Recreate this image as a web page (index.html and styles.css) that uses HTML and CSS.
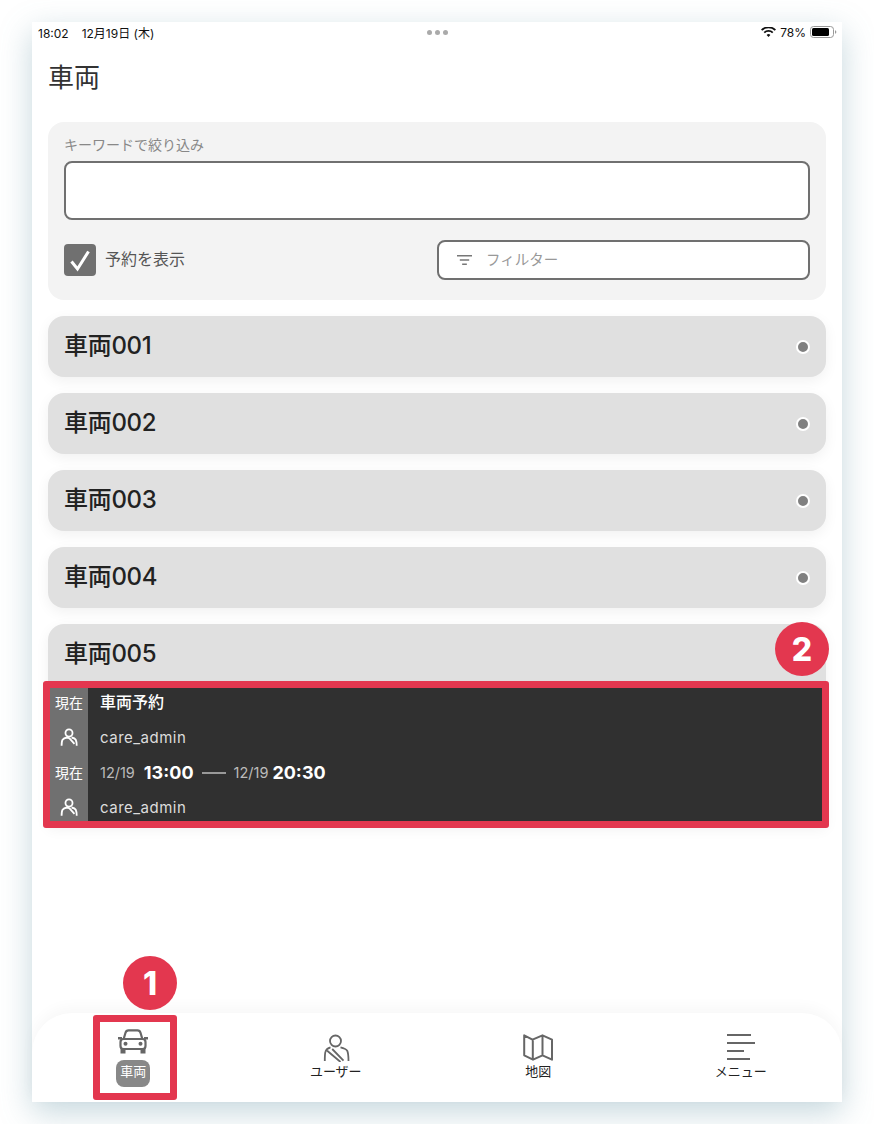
FILE: index.html
```html
<!DOCTYPE html>
<html lang="ja">
<head>
  <meta charset="UTF-8">
  <meta name="viewport" content="width=device-width, initial-scale=1.0">
  <title>車両</title>
  <link rel="stylesheet" href="styles.css">
</head>
<body>
  <div class="screen">
    <div class="status-bar">
      <div class="status-time"><span class="status-clock">18:02</span>12月19日 (木)</div>
      <div class="status-dots"><span></span><span></span><span></span></div>
      <div class="status-right">
        <svg width="15" height="11" viewBox="0 0 15 11"><path d="M7.5 9.9 5.6 7.9a2.8 2.8 0 0 1 3.8 0zM3.9 6.2 2.6 4.9a7.2 7.2 0 0 1 9.8 0L11.100 6.200a5.300 5.300 0 0 0-7.200 0zM1.300 3.700 0 2.400a10.900 10.900 0 0 1 15 0L13.700 3.700a9 9 0 0 0-12.400 0z" fill="#111"/></svg>
        <span>78%</span>
        <svg width="27" height="12" viewBox="0 0 27 12"><rect x="0.500" y="0.500" width="23" height="11" rx="3" fill="none" stroke="#999"/><rect x="2" y="2" width="17" height="8" rx="1.500" fill="#000"/><path d="M25 4.200c.9.300 1.300 1 1.300 1.800s-.4 1.500-1.300 1.800z" fill="#999"/></svg>
      </div>
    </div>

    <main class="content">
      <h1 class="page-title">車両</h1>

      <section class="filter-panel">
        <label class="field-label" for="keyword">キーワードで絞り込み</label>
        <input class="keyword-input" id="keyword" type="text">
        <div class="filter-row">
          <div class="check-group">
            <span class="check-box">
              <svg width="24" height="24" viewBox="0 0 24 24"><path d="M3.500 13.500 9.500 21 20.500 3.500" fill="none" stroke="#fff" stroke-width="3"/></svg>
            </span>
            <span class="check-label">予約を表示</span>
          </div>
          <div class="filter-btn">
            <svg width="15" height="12" viewBox="0 0 16 12"><path d="M0 1.500h16M3 6h10M5.500 10.500h5" stroke="#777" stroke-width="1.500"/></svg>
            <span>フィルター</span>
          </div>
        </div>
      </section>

      <div class="vehicle-list">
        <div class="vehicle-card"><div class="vehicle-head"><span class="vehicle-name">車両001</span><span class="status-dot"></span></div></div>
        <div class="vehicle-card"><div class="vehicle-head"><span class="vehicle-name">車両002</span><span class="status-dot"></span></div></div>
        <div class="vehicle-card"><div class="vehicle-head"><span class="vehicle-name">車両003</span><span class="status-dot"></span></div></div>
        <div class="vehicle-card"><div class="vehicle-head"><span class="vehicle-name">車両004</span><span class="status-dot"></span></div></div>
        <div class="vehicle-card open">
          <div class="vehicle-head"><span class="vehicle-name">車両005</span></div>
          <div class="reserve-panel">
            <div class="reserve-row">
              <div class="reserve-tag"><span>現在</span></div>
              <div class="reserve-title">車両予約</div>
            </div>
            <div class="reserve-row">
              <div class="reserve-tag">
                <svg width="18" height="19" viewBox="0 0 28 28"><g fill="none" stroke="#fff" stroke-width="2.800"><circle cx="14" cy="7" r="5.500"/><path d="M2.500 27c0-5 .5-8 1.500-9.500 1-1.500 3-3 6.500-3.500 2 0 3.500 .5 5 2l7 8M18 14c3 .5 5.500 1.500 6.500 3.500 1 2 1.500 5 1.500 9.500"/></g></svg>
              </div>
              <div class="reserve-user">care_admin</div>
            </div>
            <div class="reserve-row">
              <div class="reserve-tag"><span>現在</span></div>
              <div class="reserve-time">
                <span class="time-date">12/19</span><b class="time-hour">13:00</b><span class="time-dash"></span><span class="time-date">12/19</span><b class="time-hour end">20:30</b>
              </div>
            </div>
            <div class="reserve-row">
              <div class="reserve-tag">
                <svg width="18" height="19" viewBox="0 0 28 28"><g fill="none" stroke="#fff" stroke-width="2.800"><circle cx="14" cy="7" r="5.500"/><path d="M2.500 27c0-5 .5-8 1.500-9.500 1-1.500 3-3 6.500-3.500 2 0 3.500 .5 5 2l7 8M18 14c3 .5 5.500 1.500 6.500 3.500 1 2 1.500 5 1.500 9.500"/></g></svg>
              </div>
              <div class="reserve-user">care_admin</div>
            </div>
          </div>
        </div>
      </div>
    </main>

    <nav class="tab-bar">
      <div class="tab-item active">
        <svg width="30" height="25" viewBox="0 0 30 25"><g fill="none" stroke="#666" stroke-width="2.200"><path d="M5.500 10.500 7.500 3.800C8 2 9 1.300 10.500 1.300h9c1.500 0 2.500.7 3 2.500l2 6.700"/><rect x="2.500" y="10" width="25" height="10" rx="3"/></g><path d="M2.500 19h5v5.500h-5zM22.500 19h5v5.500h-5zM0 8h4v2.500H0zM26 8h4v2.500h-4z" fill="#666"/><circle cx="7.500" cy="14.800" r="2" fill="#666"/><circle cx="22.500" cy="14.800" r="2" fill="#666"/></svg>
        <span class="tab-label">車両</span>
      </div>
      <div class="tab-item">
        <svg width="28" height="28" viewBox="0 0 28 28"><g fill="none" stroke="#666" stroke-width="1.800"><circle cx="13.500" cy="7" r="5.500"/><path d="M2.800 27c0-5 .2-8 .7-9.500.6-2 2.500-3.500 5-4.200M5.200 16.700 18.500 28M10.200 15 21.500 26.700M18.500 13.300c3 .7 5.700 1.700 6.700 3.400.9 2 1.300 5.300 1.300 10.300"/></g></svg>
        <span class="tab-label">ユーザー</span>
      </div>
      <div class="tab-item">
        <svg width="30" height="28" viewBox="0 0 30 28"><path d="M1.200 1.300 9.500 5.700 19.500 1.300 29 5.700V25.700L19.500 21.300 10 25.700 1.200 21.300zM9.800 5.700V25.700M19.500 1.300V21.300" fill="none" stroke="#666" stroke-width="2" stroke-linejoin="round"/></svg>
        <span class="tab-label">地図</span>
      </div>
      <div class="tab-item">
        <svg width="28" height="28" viewBox="0 0 28 28"><path d="M0 1h24M0 9h28M0 17h17M0 25h23" fill="none" stroke="#666" stroke-width="1.800"/></svg>
        <span class="tab-label">メニュー</span>
      </div>
    </nav>

    <div class="note-frame note-frame-panel"></div>
    <div class="note-frame note-frame-tab"></div>
    <div class="note-badge note-badge-panel">2</div>
    <div class="note-badge note-badge-tab">1</div>
  </div>
</body>
</html>
```

FILE: styles.css
```css
body {
  margin: 0;
  padding: 22px 32px;
  background-color: #fff;
  font-family: 'Noto Sans CJK JP', 'Noto Sans', sans-serif;
  color: #333;
}

.screen {
  position: relative;
  display: flex;
  flex-direction: column;
  width: 810px;
  height: 1080px;
  background-color: #fff;
  box-shadow: 0 10px 30px rgba(95, 145, 160, 0.36);
}

.status-bar {
  display: flex;
  align-items: center;
  justify-content: space-between;
  height: 20px;
  padding: 0 5px 0 6px;
  font-family: 'Inter', 'Noto Sans CJK JP', sans-serif;
  font-size: 12px;
  color: #111;
}

.status-time {
  width: 200px;
}

.status-clock {
  margin-right: 13px;
}

.status-dots {
  display: flex;
  gap: 3px;
}

.status-dots span {
  width: 5px;
  height: 5px;
  border-radius: 50%;
  background-color: #aaa;
}

.status-right {
  display: flex;
  align-items: center;
  justify-content: flex-end;
  gap: 4px;
  width: 200px;
}

.content {
  flex: 1;
  padding: 0 16px;
}

.page-title {
  margin: 15px 0 27px;
  font-size: 26px;
  font-weight: 400;
  line-height: 38px;
  color: #333;
}

.filter-panel {
  height: 178px;
  padding: 13px 16px 0;
  box-sizing: border-box;
  border-radius: 16px;
  background-color: #f3f3f3;
}

.field-label {
  display: block;
  height: 26px;
  font-size: 14px;
  line-height: 19px;
  color: #888;
}

.keyword-input {
  display: block;
  width: 100%;
  height: 59px;
  box-sizing: border-box;
  border: 2px solid #707070;
  border-radius: 8px;
  background-color: #fff;
}

.filter-row {
  display: flex;
  align-items: center;
  justify-content: space-between;
  margin-top: 20px;
}

.check-group {
  display: flex;
  align-items: center;
  gap: 9px;
}

.check-box {
  display: flex;
  align-items: center;
  justify-content: center;
  width: 32px;
  height: 32px;
  border-radius: 4px;
  background-color: #707070;
}

.check-label {
  padding-bottom: 5px;
  font-size: 16px;
  font-weight: 400;
  color: #555;
}

.filter-btn {
  display: flex;
  align-items: center;
  gap: 14px;
  width: 373px;
  height: 40px;
  box-sizing: border-box;
  padding-left: 18px;
  border: 2px solid #707070;
  border-radius: 8px;
  background-color: #fff;
  font-size: 14.500px;
  color: #999;
}

.filter-btn span {
  padding-bottom: 3px;
}

.vehicle-list {
  display: flex;
  flex-direction: column;
  gap: 16px;
  margin-top: 16px;
}

.vehicle-card {
  border-radius: 16px;
  background-color: #e0e0e0;
  box-shadow: 0 4px 14px rgba(0, 0, 0, 0.06);
}

.vehicle-card.open {
  border-radius: 16px 16px 0 0;
}

.vehicle-head {
  display: flex;
  align-items: center;
  justify-content: space-between;
  height: 61px;
  padding: 0 16px;
}

.vehicle-name {
  padding-bottom: 6px;
  font-family: 'Inter', 'Noto Sans CJK JP', sans-serif;
  font-size: 24px;
  font-weight: 500;
  letter-spacing: -0.3px;
  color: #222;
}

.status-dot {
  width: 10px;
  height: 10px;
  border: 2px solid #fff;
  border-radius: 50%;
  background-color: #808080;
}

.reserve-panel {
  background-color: #303030;
}

.reserve-row {
  display: grid;
  grid-template-columns: 40px 1fr;
  height: 35px;
}

.reserve-tag {
  display: flex;
  align-items: center;
  justify-content: center;
  padding-left: 2px;
  background-color: #707070;
  font-size: 14px;
  color: #fff;
}

.reserve-tag span {
  padding-bottom: 2px;
}

.reserve-title,
.reserve-user,
.reserve-time {
  display: flex;
  align-items: center;
  padding-left: 12px;
  color: #fff;
}

.reserve-title {
  padding-bottom: 3px;
  font-size: 16px;
  font-weight: 500;
}

.reserve-user {
  font-family: 'Inter', sans-serif;
  font-size: 15px;
  letter-spacing: 0.5px;
  color: #ddd;
}

.time-date {
  font-family: 'Inter', sans-serif;
  font-size: 14.500px;
  color: #bbb;
}

.time-hour {
  margin-left: 9px;
  font-family: 'Inter', sans-serif;
  font-size: 18px;
  font-weight: 700;
}

.time-hour.end {
  margin-left: 4px;
}

.time-dash {
  width: 24px;
  height: 2px;
  margin: 0 8px;
  background-color: #999;
}

.tab-bar {
  display: grid;
  grid-template-columns: repeat(4, 1fr);
  height: 89px;
  border-radius: 40px 40px 0 0;
  background-color: #fff;
  box-shadow: 0 -6px 14px rgba(0, 0, 0, 0.03);
}

.tab-item {
  display: flex;
  flex-direction: column;
  align-items: center;
  padding-top: 21px;
}

.tab-label {
  font-size: 13px;
  font-weight: 400;
  line-height: 18px;
  color: #222;
}

.tab-item.active {
  padding-top: 16px;
}

.tab-item.active .tab-label {
  width: 34px;
  height: 27px;
  margin-top: 6px;
  border-radius: 8px;
  background-color: #888;
  line-height: 22px;
  text-align: center;
  color: #fff;
}

/* annotations on top of the screenshot */
.note-frame {
  position: absolute;
  box-sizing: border-box;
  border: 7px solid #e3374f;
  border-radius: 3px;
}

.note-frame-panel {
  left: 11px;
  top: 659px;
  width: 786px;
  height: 147px;
}

.note-frame-tab {
  left: 61px;
  top: 993px;
  width: 84px;
  height: 85px;
}

.note-badge {
  position: absolute;
  display: flex;
  align-items: center;
  justify-content: center;
  width: 54px;
  height: 54px;
  border-radius: 50%;
  background-color: #e3374f;
  font-family: 'Inter', sans-serif;
  font-size: 32px;
  font-weight: 800;
  color: #fff;
}

.note-badge-panel {
  left: 743px;
  top: 600px;
}

.note-badge-tab {
  left: 91px;
  top: 934px;
}
```
